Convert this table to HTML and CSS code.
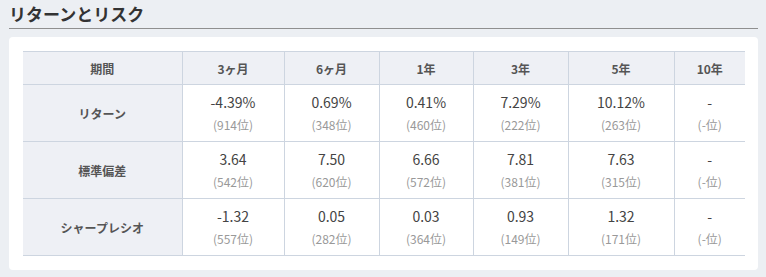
FILE: index.html
```html
<!DOCTYPE html>
<html lang="ja">
<head>
<meta charset="utf-8">
<link rel="stylesheet" href="styles.css">
</head>
<body>
<section class="section">
  <h2 class="title">リターンとリスク</h2>
  <div class="card">
    <table class="rr">
      <colgroup>
        <col class="c0"><col class="c1"><col class="c2"><col class="c3"><col class="c4"><col class="c5"><col class="c6">
      </colgroup>
      <thead>
        <tr><th>期間</th><th>3ヶ月</th><th>6ヶ月</th><th>1年</th><th>3年</th><th>5年</th><th>10年</th></tr>
      </thead>
      <tbody>
        <tr>
          <th>リターン</th>
          <td><span class="v">-4.39%</span><span class="r">(914位)</span></td>
          <td><span class="v">0.69%</span><span class="r">(348位)</span></td>
          <td><span class="v">0.41%</span><span class="r">(460位)</span></td>
          <td><span class="v">7.29%</span><span class="r">(222位)</span></td>
          <td><span class="v">10.12%</span><span class="r">(263位)</span></td>
          <td><span class="v">-</span><span class="r">(-位)</span></td>
        </tr>
        <tr>
          <th>標準偏差</th>
          <td><span class="v">3.64</span><span class="r">(542位)</span></td>
          <td><span class="v">7.50</span><span class="r">(620位)</span></td>
          <td><span class="v">6.66</span><span class="r">(572位)</span></td>
          <td><span class="v">7.81</span><span class="r">(381位)</span></td>
          <td><span class="v">7.63</span><span class="r">(315位)</span></td>
          <td><span class="v">-</span><span class="r">(-位)</span></td>
        </tr>
        <tr>
          <th>シャープレシオ</th>
          <td><span class="v">-1.32</span><span class="r">(557位)</span></td>
          <td><span class="v">0.05</span><span class="r">(282位)</span></td>
          <td><span class="v">0.03</span><span class="r">(364位)</span></td>
          <td><span class="v">0.93</span><span class="r">(149位)</span></td>
          <td><span class="v">1.32</span><span class="r">(171位)</span></td>
          <td><span class="v">-</span><span class="r">(-位)</span></td>
        </tr>
      </tbody>
    </table>
  </div>
</section>
</body>
</html>
```

FILE: styles.css
```css
html, body {
  margin: 0;
  padding: 0;
  background: #eceff3;
}
body {
  font-family: "Noto Sans CJK JP", "Noto Sans", sans-serif;
  color: #444;
}
.section {
  margin: 0 8px 0 9px;
}
.title {
  margin: 0;
  padding: 1px 0 0 0;
  height: 27px;
  font-size: 17px;
  line-height: 26px;
  font-weight: bold;
  color: #333;
  border-bottom: 1px solid #8f8f8f;
}
.card {
  margin-top: 8px;
  background: #fff;
  border-radius: 4px;
  padding: 14px 13px 14px 14px;
}
.rr {
  width: 722px;
  table-layout: fixed;
  border-collapse: collapse;
  text-align: center;
}
.c0 { width: 159px; }
.c1 { width: 102px; }
.c2 { width: 95px; }
.c3 { width: 94px; }
.c4 { width: 95px; }
.c5 { width: 106px; }
.c6 { width: 71px; }
.rr th, .rr td {
  border-top: 1px solid #cdd5e0;
  border-bottom: 1px solid #cdd5e0;
  border-left: 1px solid #cdd5e0;
  padding: 0;
}
.rr tr > :first-child {
  border-left: none;
}
.rr th {
  background: #eef0f5;
  font-size: 12px;
  font-weight: bold;
  color: #555;
}
.rr thead th {
  height: 32px;
}
.rr tbody th, .rr tbody td {
  height: 56px;
}
.rr tbody td {
  padding-top: 1px;
  height: 55px;
}
.v {
  display: block;
  font-size: 14px;
  line-height: 20px;
  color: #444;
}
.r {
  display: block;
  font-size: 12px;
  line-height: 20px;
  color: #999;
  margin-top: 3px;
}
```
